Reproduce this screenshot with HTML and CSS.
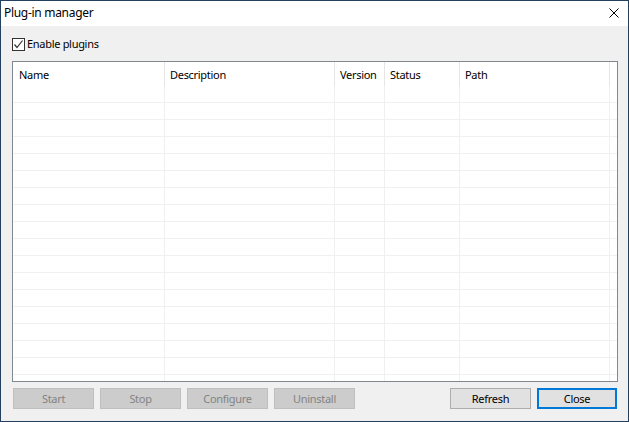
FILE: index.html
```html
<!DOCTYPE html>
<html>
<head>
<meta charset="utf-8">
<link rel="stylesheet" href="styles.css">
</head>
<body>
<div class="window">
  <div class="titlebar">
    <span class="title">Plug-in manager</span>
    <span class="close-x"><svg width="10" height="10" viewBox="0 0 10 10"><path d="M0.5 0.5 L9.5 9.5 M9.5 0.5 L0.5 9.5" stroke="#000" stroke-width="1" fill="none"/></svg></span>
  </div>
  <div class="content">
    <label class="check">
      <span class="box"><svg width="11" height="11" viewBox="0 0 11 11"><path d="M1.5 5.5 L4 8.5 L9.5 1.5" stroke="#333" stroke-width="1.2" fill="none"/></svg></span>
      <span class="check-label">Enable plugins</span>
    </label>
    <div class="list">
      <div class="row header">
        <div class="cell c-name">Name</div>
        <div class="cell c-desc">Description</div>
        <div class="cell c-ver">Version</div>
        <div class="cell c-stat">Status</div>
        <div class="cell c-path">Path</div>
      </div>
      <div class="row"><div class="cell c-name"></div><div class="cell c-desc"></div><div class="cell c-ver"></div><div class="cell c-stat"></div><div class="cell c-path"></div></div>
      <div class="row"><div class="cell c-name"></div><div class="cell c-desc"></div><div class="cell c-ver"></div><div class="cell c-stat"></div><div class="cell c-path"></div></div>
      <div class="row"><div class="cell c-name"></div><div class="cell c-desc"></div><div class="cell c-ver"></div><div class="cell c-stat"></div><div class="cell c-path"></div></div>
      <div class="row"><div class="cell c-name"></div><div class="cell c-desc"></div><div class="cell c-ver"></div><div class="cell c-stat"></div><div class="cell c-path"></div></div>
      <div class="row"><div class="cell c-name"></div><div class="cell c-desc"></div><div class="cell c-ver"></div><div class="cell c-stat"></div><div class="cell c-path"></div></div>
      <div class="row"><div class="cell c-name"></div><div class="cell c-desc"></div><div class="cell c-ver"></div><div class="cell c-stat"></div><div class="cell c-path"></div></div>
      <div class="row"><div class="cell c-name"></div><div class="cell c-desc"></div><div class="cell c-ver"></div><div class="cell c-stat"></div><div class="cell c-path"></div></div>
      <div class="row"><div class="cell c-name"></div><div class="cell c-desc"></div><div class="cell c-ver"></div><div class="cell c-stat"></div><div class="cell c-path"></div></div>
      <div class="row"><div class="cell c-name"></div><div class="cell c-desc"></div><div class="cell c-ver"></div><div class="cell c-stat"></div><div class="cell c-path"></div></div>
      <div class="row"><div class="cell c-name"></div><div class="cell c-desc"></div><div class="cell c-ver"></div><div class="cell c-stat"></div><div class="cell c-path"></div></div>
      <div class="row"><div class="cell c-name"></div><div class="cell c-desc"></div><div class="cell c-ver"></div><div class="cell c-stat"></div><div class="cell c-path"></div></div>
      <div class="row"><div class="cell c-name"></div><div class="cell c-desc"></div><div class="cell c-ver"></div><div class="cell c-stat"></div><div class="cell c-path"></div></div>
      <div class="row"><div class="cell c-name"></div><div class="cell c-desc"></div><div class="cell c-ver"></div><div class="cell c-stat"></div><div class="cell c-path"></div></div>
      <div class="row"><div class="cell c-name"></div><div class="cell c-desc"></div><div class="cell c-ver"></div><div class="cell c-stat"></div><div class="cell c-path"></div></div>
      <div class="row"><div class="cell c-name"></div><div class="cell c-desc"></div><div class="cell c-ver"></div><div class="cell c-stat"></div><div class="cell c-path"></div></div>
      <div class="row"><div class="cell c-name"></div><div class="cell c-desc"></div><div class="cell c-ver"></div><div class="cell c-stat"></div><div class="cell c-path"></div></div>
      <div class="row"><div class="cell c-name"></div><div class="cell c-desc"></div><div class="cell c-ver"></div><div class="cell c-stat"></div><div class="cell c-path"></div></div>
      <div class="row"><div class="cell c-name"></div><div class="cell c-desc"></div><div class="cell c-ver"></div><div class="cell c-stat"></div><div class="cell c-path"></div></div>
    </div>
    <div class="buttons">
      <button class="btn disabled">Start</button>
      <button class="btn disabled">Stop</button>
      <button class="btn disabled">Configure</button>
      <button class="btn disabled">Uninstall</button>
      <span class="spacer"></span>
      <button class="btn">Refresh</button>
      <button class="btn default">Close</button>
    </div>
  </div>
</div>
</body>
</html>
```

FILE: styles.css
```css
html, body {
  margin: 0;
  padding: 0;
  background: #f0f0f0;
}
body {
  font-family: "Noto Sans", "DejaVu Sans", sans-serif;
  font-size: 11px;
  letter-spacing: -0.3px;
  color: #000;
}
.window {
  width: 629px;
  height: 422px;
  box-sizing: border-box;
  border: 1px solid #23415f;
  display: flex;
  flex-direction: column;
  background: #f0f0f0;
  overflow: hidden;
}
.titlebar {
  height: 25px;
  background: #fff;
  display: flex;
  align-items: center;
  justify-content: space-between;
  padding: 0 9px 0 3px;
  flex: none;
}
.title {
  font-size: 12px;
  line-height: 16px;
  margin-top: -1px;
}
.close-x {
  display: flex;
  margin-top: -1px;
}
.content {
  flex: 1;
  display: flex;
  flex-direction: column;
  padding: 11px 10px 0 11px;
}
.check {
  display: flex;
  align-items: center;
  height: 14px;
}
.box {
  width: 11px;
  height: 11px;
  border: 1px solid #333;
  background: #fff;
  display: flex;
}
.check-label {
  margin-left: 2px;
  line-height: 14px;
}
.list {
  margin-top: 10px;
  height: 319px;
  border: 1px solid #828790;
  background: #fff;
  overflow: hidden;
}
.row {
  display: flex;
  height: 17px;
  box-sizing: border-box;
  border-bottom: 1px solid #f0f0f0;
}
.row.header {
  height: 24px;
  border-bottom: none;
}
.cell {
  box-sizing: border-box;
  border-right: 1px solid #f0f0f0;
  padding-left: 5px;
  white-space: nowrap;
}
.header .cell {
  line-height: 25px;
  border-right-color: #e5e5e5;
}
.c-name { width: 152px; padding-left: 6px; }
.c-desc { width: 170px; }
.c-ver { width: 50px; }
.c-stat { width: 75px; }
.c-path { width: 150px; }
.buttons {
  display: flex;
  margin-top: 6px;
  padding-left: 1px;
  gap: 6px;
}
.spacer {
  flex: 1;
}
.btn {
  width: 81px;
  height: 21px;
  box-sizing: border-box;
  border: 1px solid #adadad;
  background: #e1e1e1;
  font-family: "Noto Sans", "DejaVu Sans", sans-serif;
  font-size: 11px;
  letter-spacing: -0.3px;
  color: #000;
  padding: 0;
  line-height: 18px;
}
.btn.disabled {
  background: #cccccc;
  border-color: #bfbfbf;
  color: #838383;
}
.btn.default {
  border: 2px solid #0078d7;
  width: 80px;
  margin-right: 1px;
}
```
